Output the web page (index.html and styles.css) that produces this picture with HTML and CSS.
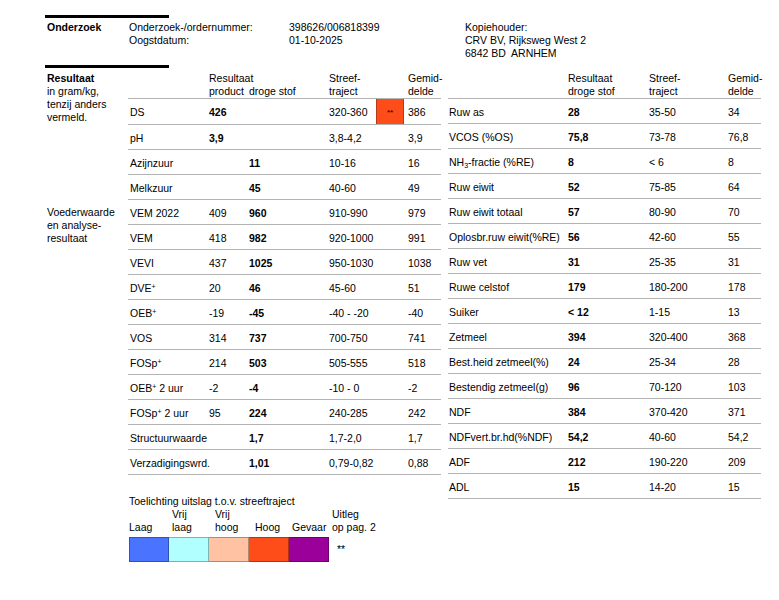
FILE: index.html
```html
<!DOCTYPE html>
<html lang="nl">
<head>
    <meta charset="UTF-8">
    <meta name="viewport" content="width=device-width, initial-scale=1.0">
    <title>Onderzoek 398626/006818399</title>
    <link rel="stylesheet" href="styles.css">
</head>
<body>
<div class="page">
    <div class="bar"></div>
    <div class="info">
        <div class="info-title">Onderzoek</div>
        <div>Onderzoek-/ordernummer:<br>Oogstdatum:</div>
        <div>398626/006818399<br>01-10-2025</div>
        <div>Kopiehouder:<br>CRV BV, Rijksweg West 2<br>6842 BD&nbsp; ARNHEM</div>
    </div>
    <div class="bar bar-second"></div>

    <div class="results">
        <div class="results-left">
            <table class="grid grid-left">
                <colgroup>
                    <col class="c-side"><col class="c-label"><col class="c-product">
                    <col class="c-dry"><col class="c-target"><col class="c-flag"><col class="c-avg">
                </colgroup>
                <tr>
                    <th class="side" rowspan="2"><b>Resultaat</b><br>in gram/kg,<br>tenzij anders<br>vermeld.</th>
                    <th></th>
                    <th>Resultaat<br>product</th>
                    <th><br>droge stof</th>
                    <th>Streef-<br>traject</th>
                    <th></th>
                    <th class="avg">Gemid-<br>delde</th>
                </tr>
                <tr><td class="lbl">DS</td><td><b>426</b></td><td></td><td>320-360</td><td class="flag">**</td><td class="avg">386</td></tr>
                <tr><td class="side" rowspan="3"></td><td class="lbl">pH</td><td><b>3,9</b></td><td></td><td>3,8-4,2</td><td></td><td class="avg">3,9</td></tr>
                <tr><td class="lbl">Azijnzuur</td><td></td><td><b>11</b></td><td>10-16</td><td></td><td class="avg">16</td></tr>
                <tr><td class="lbl">Melkzuur</td><td></td><td><b>45</b></td><td>40-60</td><td></td><td class="avg">49</td></tr>
                <tr><td class="side side-text" rowspan="11">Voederwaarde<br>en analyse-<br>resultaat</td><td class="lbl">VEM 2022</td><td>409</td><td><b>960</b></td><td>910-990</td><td></td><td class="avg">979</td></tr>
                <tr><td class="lbl">VEM</td><td>418</td><td><b>982</b></td><td>920-1000</td><td></td><td class="avg">991</td></tr>
                <tr><td class="lbl">VEVI</td><td>437</td><td><b>1025</b></td><td>950-1030</td><td></td><td class="avg">1038</td></tr>
                <tr><td class="lbl">DVE<sup>+</sup></td><td>20</td><td><b>46</b></td><td>45-60</td><td></td><td class="avg">51</td></tr>
                <tr><td class="lbl">OEB<sup>+</sup></td><td>-19</td><td><b>-45</b></td><td>-40 - -20</td><td></td><td class="avg">-40</td></tr>
                <tr><td class="lbl">VOS</td><td>314</td><td><b>737</b></td><td>700-750</td><td></td><td class="avg">741</td></tr>
                <tr><td class="lbl">FOSp<sup>+</sup></td><td>214</td><td><b>503</b></td><td>505-555</td><td></td><td class="avg">518</td></tr>
                <tr><td class="lbl">OEB<sup>+</sup> 2 uur</td><td>-2</td><td><b>-4</b></td><td>-10 - 0</td><td></td><td class="avg">-2</td></tr>
                <tr><td class="lbl">FOSp<sup>+</sup> 2 uur</td><td>95</td><td><b>224</b></td><td>240-285</td><td></td><td class="avg">242</td></tr>
                <tr><td class="lbl">Structuurwaarde</td><td></td><td><b>1,7</b></td><td>1,7-2,0</td><td></td><td class="avg">1,7</td></tr>
                <tr><td class="lbl">Verzadigingswrd.</td><td></td><td><b>1,01</b></td><td>0,79-0,82</td><td></td><td class="avg">0,88</td></tr>
            </table>

            <div class="legend">
                <div>Toelichting uitslag t.o.v. streeftraject</div>
                <div class="legend-scale">
                    <div class="legend-item">
                        <div class="legend-label">Laag</div>
                        <div class="swatch swatch-low"></div>
                    </div>
                    <div class="legend-item">
                        <div class="legend-label pad-3">Vrij<br>laag</div>
                        <div class="swatch swatch-rather-low"></div>
                    </div>
                    <div class="legend-item">
                        <div class="legend-label pad-6">Vrij<br>hoog</div>
                        <div class="swatch swatch-rather-high"></div>
                    </div>
                    <div class="legend-item">
                        <div class="legend-label pad-6">Hoog</div>
                        <div class="swatch swatch-high"></div>
                    </div>
                    <div class="legend-item">
                        <div class="legend-label pad-3">Gevaar</div>
                        <div class="swatch swatch-danger"></div>
                    </div>
                    <div class="legend-item legend-note">
                        <div class="legend-label pad-3">Uitleg<br>op pag. 2</div>
                        <div class="note-mark">**</div>
                    </div>
                </div>
            </div>
        </div>

        <table class="grid grid-right">
            <colgroup>
                <col class="r-label"><col class="r-dry"><col class="r-target"><col class="r-avg">
            </colgroup>
            <tr><th></th><th>Resultaat<br>droge stof</th><th>Streef-<br>traject</th><th>Gemid-<br>delde</th></tr>
            <tr><td>Ruw as</td><td><b>28</b></td><td>35-50</td><td>34</td></tr>
            <tr><td>VCOS (%OS)</td><td><b>75,8</b></td><td>73-78</td><td>76,8</td></tr>
            <tr><td>NH<sub>3</sub>-fractie (%RE)</td><td><b>8</b></td><td>&lt; 6</td><td>8</td></tr>
            <tr><td>Ruw eiwit</td><td><b>52</b></td><td>75-85</td><td>64</td></tr>
            <tr><td>Ruw eiwit totaal</td><td><b>57</b></td><td>80-90</td><td>70</td></tr>
            <tr><td>Oplosbr.ruw eiwit(%RE)</td><td><b>56</b></td><td>42-60</td><td>55</td></tr>
            <tr><td>Ruw vet</td><td><b>31</b></td><td>25-35</td><td>31</td></tr>
            <tr><td>Ruwe celstof</td><td><b>179</b></td><td>180-200</td><td>178</td></tr>
            <tr><td>Suiker</td><td><b>&lt; 12</b></td><td>1-15</td><td>13</td></tr>
            <tr><td>Zetmeel</td><td><b>394</b></td><td>320-400</td><td>368</td></tr>
            <tr><td>Best.heid zetmeel(%)</td><td><b>24</b></td><td>25-34</td><td>28</td></tr>
            <tr><td>Bestendig zetmeel(g)</td><td><b>96</b></td><td>70-120</td><td>103</td></tr>
            <tr><td>NDF</td><td><b>384</b></td><td>370-420</td><td>371</td></tr>
            <tr><td>NDFvert.br.hd(%NDF)</td><td><b>54,2</b></td><td>40-60</td><td>54,2</td></tr>
            <tr><td>ADF</td><td><b>212</b></td><td>190-220</td><td>209</td></tr>
            <tr><td>ADL</td><td><b>15</b></td><td>14-20</td><td>15</td></tr>
        </table>
    </div>
</div>
</body>
</html>
```

FILE: styles.css
```css
body {
    margin: 0;
    font-family: "Liberation Sans", Arial, sans-serif;
    font-size: 10.5px;
    line-height: 13px;
    color: #000;
    background: #fff;
}

.page {
    padding: 15px 0 0 45px;
}

/* thick black rules above the sections */
.bar {
    width: 124px;
    height: 3px;
    background: #000;
}

.bar-second {
    margin-top: 5px;
}

.info {
    display: grid;
    grid-template-columns: 84px 160px 176px auto;
    margin-top: 3px;
}

.info-title {
    font-weight: bold;
    padding-left: 2px;
}

.results {
    display: flex;
    align-items: flex-start;
    margin-top: 4px;
}

/* result tables */
.grid {
    border-collapse: collapse;
    border-spacing: 0;
    table-layout: fixed;
}

.grid-left {
    width: 396px;
}

.grid-right {
    width: 313px;
    margin-left: 7px;
}

.c-side { width: 83px; }
.c-label { width: 80px; }
.c-product { width: 40px; }
.c-dry { width: 80px; }
.c-target { width: 48px; }
.c-flag { width: 28px; }
.c-avg { width: 37px; }

.r-label { width: 119px; }
.r-dry { width: 81px; }
.r-target { width: 79px; }
.r-avg { width: 34px; }

.grid th {
    font-weight: normal;
    text-align: left;
    vertical-align: top;
    white-space: nowrap;
    padding: 0 0 0 1px;
    border-bottom: 1px solid #b3b3b3;
}

.grid td {
    vertical-align: top;
    white-space: nowrap;
    padding: 7px 0 4px 1px;
    border-bottom: 1px solid #b3b3b3;
}

.grid .side {
    border-bottom: none;
    padding-left: 2px;
    white-space: nowrap;
}

.grid td.side {
    padding-top: 7px;
    padding-bottom: 0;
}

.grid .lbl {
    padding-left: 2px;
}

.grid .avg {
    padding-left: 4px;
}

.grid td.flag {
    background: #ff4d1a;
    text-align: center;
    font-size: 8px;
    padding-left: 0;
    box-shadow: inset 1px 0 #b8391a, inset -1px 0 #b8391a;
}

sup {
    font-size: 7px;
    line-height: 0;
    vertical-align: 3px;
}

sub {
    font-size: 7px;
    line-height: 0;
    vertical-align: -2px;
}

/* legend under the left table */
.legend {
    margin: 20px 0 0 84px;
}

.legend-scale {
    display: flex;
}

.legend-item {
    width: 40px;
    display: flex;
    flex-direction: column;
}

.legend-note {
    width: auto;
}

.legend-label {
    height: 26px;
    display: flex;
    flex-direction: column;
    justify-content: flex-end;
    white-space: nowrap;
}

.pad-3 { padding-left: 3px; }
.pad-6 { padding-left: 6px; }

.swatch {
    height: 25px;
    margin-top: 3px;
    box-sizing: border-box;
    border: 1px solid rgba(0, 0, 0, 0.3);
}

.legend-item + .legend-item .swatch {
    border-left: none;
}

.swatch-low { background: #4a74ff; }
.swatch-rather-low { background: #b2ffff; }
.swatch-rather-high { background: #ffc3a3; }
.swatch-high { background: #ff4d1a; }
.swatch-danger { background: #9b009b; }

.note-mark {
    padding: 9px 0 0 8px;
}
```
